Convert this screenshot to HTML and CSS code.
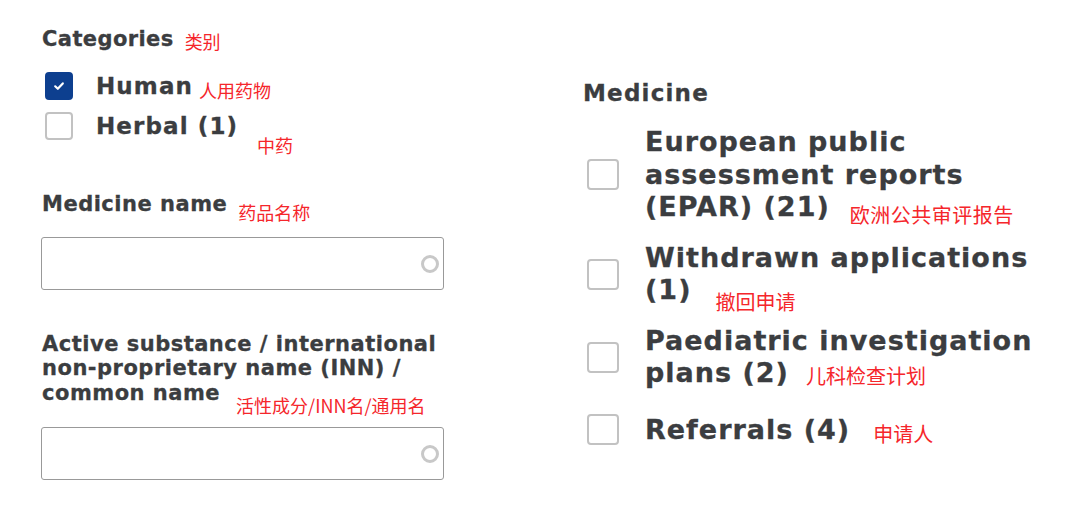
FILE: index.html
```html
<!DOCTYPE html>
<html lang="en">
<head>
    <meta charset="UTF-8">
    <meta name="viewport" content="width=device-width, initial-scale=1.0">
    <title>Search filters</title>
    <link rel="stylesheet" href="styles.css">
</head>
<body>
    <div class="filters">
        <div class="col-left">
            <div class="group-title">Categories<span class="note note-cat">类别</span></div>

            <label class="check-row">
                <span class="box checked">
                    <svg viewBox="0 0 12 12" width="12" height="12"><path d="M2.2 6.3 L4.8 8.8 L9.8 3.4" fill="none" stroke="#fff" stroke-width="2.2" stroke-linecap="round" stroke-linejoin="round"/></svg>
                </span>
                <span class="check-text">Human<span class="note note-human">人用药物</span></span>
            </label>
            <label class="check-row">
                <span class="box"></span>
                <span class="check-text">Herbal (1)<span class="note note-herbal">中药</span></span>
            </label>

            <div class="field">
                <div class="field-label">Medicine name<span class="note note-name">药品名称</span></div>
                <div class="input-wrap">
                    <input type="text" class="text-input">
                    <span class="spinner"></span>
                </div>
            </div>

            <div class="field field-inn">
                <div class="field-label">Active substance / international<br>non-proprietary name (INN) /<br>common name<span class="note note-inn">活性成分/INN名/通用名</span></div>
                <div class="input-wrap">
                    <input type="text" class="text-input">
                    <span class="spinner"></span>
                </div>
            </div>
        </div>

        <div class="col-right">
            <div class="group-title big">Medicine</div>

            <label class="med-row">
                <span class="box lg"></span>
                <span class="med-text">European public assessment reports (EPAR) (21)<span class="note note-epar">欧洲公共审评报告</span></span>
            </label>
            <label class="med-row">
                <span class="box lg"></span>
                <span class="med-text">Withdrawn applications (1)<span class="note note-wd">撤回申请</span></span>
            </label>
            <label class="med-row">
                <span class="box lg"></span>
                <span class="med-text">Paediatric investigation plans (2)<span class="note note-pip">儿科检查计划</span></span>
            </label>
            <label class="med-row">
                <span class="box lg"></span>
                <span class="med-text">Referrals (4)<span class="note note-ref">申请人</span></span>
            </label>
        </div>
    </div>
</body>
</html>
```

FILE: styles.css
```css
body {
    margin: 0;
    background: #fff;
    font-family: "DejaVu Sans", Verdana, sans-serif;
    color: #3b3d40;
}
.filters {
    display: flex;
    padding: 27px 0 0 42px;
}
.col-left {
    width: 403px;
}
.col-right {
    width: 450px;
    margin-left: 138px;
    padding-top: 54px;
}
.group-title {
    font-size: 21px;
    font-weight: bold;
    line-height: 24px;
    letter-spacing: 0.4px;
    -webkit-text-stroke: 0.3px #3b3d40;
}
.group-title.big {
    font-size: 23px;
    letter-spacing: 1.2px;
}

/* red annotations */
.note {
    font-family: "Noto Sans CJK SC", sans-serif;
    font-weight: normal;
    font-size: 18px;
    letter-spacing: 0;
    color: #f5262b;
    -webkit-text-stroke: 0;
    line-height: 1;
    position: relative;
    white-space: nowrap;
}
.note-cat { margin-left: 11px; top: 3px; }
.note-human { margin-left: 6px; top: 4px; }
.note-herbal {
    position: absolute;
    left: 161px;
    top: 23px;
}
.note-name { margin-left: 11px; top: 9px; }
.note-inn { margin-left: 16px; top: 13px; }
.note-epar { font-size: 20px; letter-spacing: 0.5px; margin-left: 20px; top: 7px; }
.note-wd { font-size: 20px; margin-left: 24px; top: 11px; }
.note-pip { font-size: 20px; margin-left: 17px; top: 2px; }
.note-ref { font-size: 20px; margin-left: 23px; top: 3px; }

.check-row {
    display: flex;
    align-items: center;
    margin-top: 21px;
}
.check-row + .check-row {
    margin-top: 12px;
}
.box {
    width: 24px;
    height: 24px;
    border: 2px solid #c2c2c2;
    border-radius: 4px;
    flex: none;
    display: flex;
    align-items: center;
    justify-content: center;
    margin-left: 3px;
    background: #fff;
}
.box.checked {
    background: #0d3f8f;
    border-color: #0d3f8f;
}
.box.lg {
    width: 28px;
    height: 27px;
    margin-left: 4px;
}
.check-text {
    font-size: 23px;
    font-weight: bold;
    letter-spacing: 1.1px;
    -webkit-text-stroke: 0.3px #3b3d40;
    margin-left: 23px;
    position: relative;
}
.field {
    margin-top: 52px;
}
.field-label {
    font-size: 21px;
    font-weight: bold;
    line-height: 24.5px;
    letter-spacing: 0.5px;
    -webkit-text-stroke: 0.3px #3b3d40;
}
.field-inn {
    margin-top: 42px;
}
.input-wrap {
    position: relative;
    margin-top: 20px;
}
.field-inn .input-wrap {
    margin-top: 22px;
}
.text-input {
    display: block;
    box-sizing: border-box;
    width: 403px;
    height: 53px;
    border: 1px solid #999;
    border-radius: 3px;
    background: #fff;
    margin: 0 0 0 -1px;
}
.spinner {
    position: absolute;
    right: 6px;
    top: 18px;
    width: 12px;
    height: 12px;
    border: 3px solid #c8c8c8;
    border-radius: 50%;
}
.med-row {
    display: flex;
    align-items: center;
    margin-top: 18px;
}
.col-right .group-title + .med-row {
    margin-top: 21px;
}
.med-row:last-child {
    margin-top: 24px;
}
.med-text {
    font-size: 27px;
    font-weight: bold;
    line-height: 32.5px;
    letter-spacing: 1px;
    -webkit-text-stroke: 0.3px #3b3d40;
    margin-left: 26px;
    max-width: 395px;
}
```
